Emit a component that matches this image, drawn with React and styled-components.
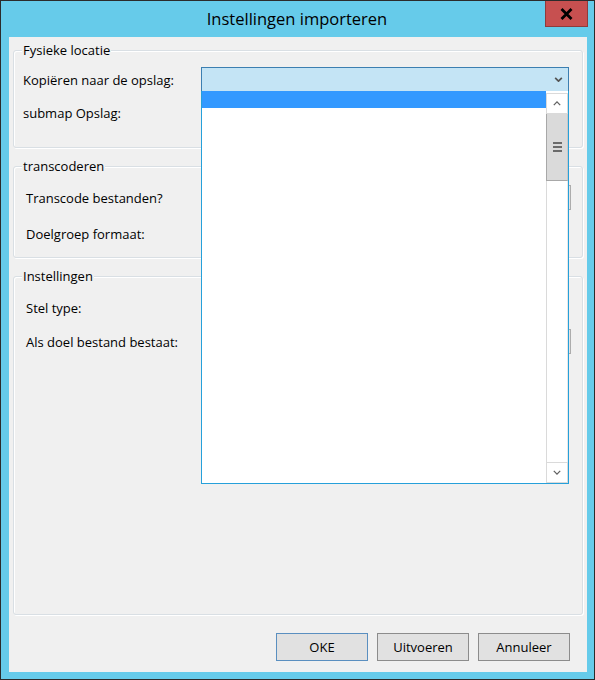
import React from 'react';
import styled, { createGlobalStyle } from 'styled-components';

const GlobalStyle = createGlobalStyle`
  html, body {
    margin: 0;
    padding: 0;
    background: #ffffff;
  }
  body {
    font-family: "Open Sans", "Noto Sans", sans-serif;
    color: #000;
  }
`;

const Window = styled.div`
  width: 595px;
  height: 680px;
  box-sizing: border-box;
  border: 1px solid #2b2b2b;
  background: #66cbea;
  display: flex;
  flex-direction: column;
`;

const TitleBar = styled.div`
  height: 36px;
  display: flex;
  align-items: flex-start;
  flex-shrink: 0;
`;

const Title = styled.div`
  flex: 1;
  padding-left: 48px;
  text-align: center;
  font-size: 16.5px;
  line-height: 36px;
  color: #000;
`;

const CloseButton = styled.div`
  width: 43px;
  height: 26px;
  margin-right: 6px;
  box-sizing: border-box;
  background: #c75050;
  border: 1px solid #8f3b3b;
  border-top: none;
  display: flex;
  align-items: center;
  justify-content: center;
`;

const Client = styled.div`
  flex: 1;
  margin: 0 7px 7px 8px;
  background: #f0f0f0;
  box-sizing: border-box;
  padding: 13px 4px 11px 4px;
  display: flex;
  flex-direction: column;
  gap: 18px;
`;

const Group = styled.div`
  position: relative;
  box-sizing: border-box;
  height: ${({ $h }) => ($h ? `${$h}px` : 'auto')};
  flex: ${({ $grow }) => ($grow ? 1 : 'none')};
  border: 1px solid #d9dfe4;
  border-radius: 3px;
  box-shadow: inset 1px 1px 0 #fff, 1px 1px 0 #fff;
  padding: ${({ $top }) => $top}px 13px 0 ${({ $left }) => $left}px;
  display: flex;
  flex-direction: column;
  gap: ${({ $gap }) => $gap}px;
`;

const Legend = styled.span`
  position: absolute;
  top: -10px;
  left: 8px;
  padding: 0 1px;
  background: #f0f0f0;
  font-size: 13px;
  line-height: 18px;
`;

const Row = styled.div`
  display: grid;
  grid-template-columns: 1fr 368px;
  align-items: center;
  height: 25px;
`;

const Label = styled.span`
  font-size: 13px;
  line-height: 18px;
  white-space: nowrap;
`;

const Combo = styled.div`
  position: relative;
  height: 25px;
  box-sizing: border-box;
  border: 1px solid #3c7fb1;
  background: #c4e4f5;
  display: flex;
  align-items: center;
  justify-content: flex-end;
  padding-right: 5px;
`;

const HiddenCombo = styled.div`
  height: 25px;
  margin-right: -2px;
  box-sizing: border-box;
  border: 1px solid #acacac;
  background: #e5e5e5;
`;

const Dropdown = styled.div`
  position: absolute;
  z-index: 10;
  top: 100%;
  left: -1px;
  width: 368px;
  height: 393px;
  box-sizing: border-box;
  border: 1px solid #26a0da;
  border-top: none;
  background: #fff;
  display: flex;
`;

const List = styled.div`
  flex: 1;
`;

const SelectedItem = styled.div`
  height: 17px;
  background: #3399ff;
`;

const Scrollbar = styled.div`
  width: 22px;
  padding-top: 2px;
  display: flex;
  flex-direction: column;
  box-sizing: border-box;
`;

const ArrowButton = styled.div`
  height: 21px;
  box-sizing: border-box;
  border: 1px solid #dadada;
  background: #fff;
  display: flex;
  align-items: center;
  justify-content: center;
`;

const Thumb = styled.div`
  height: 67px;
  box-sizing: border-box;
  background: #dadada;
  border: 1px solid #a8a8a8;
  border-top: none;
  border-right-color: #c8c8c8;
  display: flex;
  flex-direction: column;
  align-items: center;
  justify-content: center;
  gap: 2px;
`;

const Grip = styled.span`
  width: 9px;
  height: 2px;
  background: #6a6a6a;
`;

const Track = styled.div`
  flex: 1;
  background: #fff;
  border-left: 1px solid #dadada;
  border-right: 1px solid #e8e8e8;
`;

const ButtonRow = styled.div`
  display: flex;
  justify-content: flex-end;
  gap: 9px;
  padding-right: 13px;
`;

const Button = styled.div`
  width: 92px;
  height: 28px;
  box-sizing: border-box;
  background: #e1e1e1;
  border: 1px solid ${({ $default }) => ($default ? '#5a8fc0' : '#8c8c8c')};
  display: flex;
  align-items: center;
  justify-content: center;
  font-size: 13px;
  color: #000;
`;

const Chevron = ({ up, size = 9, stroke = '#555', width = 2 }) => (
  <svg width={size} height={Math.round(size * 0.6)} viewBox="0 0 10 6">
    <polyline
      points={up ? '1,5 5,1 9,5' : '1,1 5,5 9,1'}
      fill="none"
      stroke={stroke}
      strokeWidth={width}
    />
  </svg>
);

const CloseGlyph = () => (
  <svg width="13" height="12" viewBox="0 0 13 12">
    <path d="M1.5 1 L11.5 11 M11.5 1 L1.5 11" stroke="#000" strokeWidth="2.8" strokeLinecap="butt" />
  </svg>
);

const App = () => (
  <>
    <GlobalStyle />
    <Window>
      <TitleBar>
        <Title>Instellingen importeren</Title>
        <CloseButton>
          <CloseGlyph />
        </CloseButton>
      </TitleBar>
      <Client>
        <Group $h={98} $top={16} $left={9} $gap={8}>
          <Legend>Fysieke locatie</Legend>
          <Row>
            <Label>Kopiëren naar de opslag:</Label>
            <Combo>
              <Chevron />
              <Dropdown>
                <List>
                  <SelectedItem />
                </List>
                <Scrollbar>
                  <ArrowButton>
                    <Chevron up size={8} stroke="#606060" width={1.6} />
                  </ArrowButton>
                  <Thumb>
                    <Grip />
                    <Grip />
                    <Grip />
                  </Thumb>
                  <Track />
                  <ArrowButton>
                    <Chevron size={8} stroke="#606060" width={1.6} />
                  </ArrowButton>
                </Scrollbar>
              </Dropdown>
            </Combo>
          </Row>
          <Row>
            <Label>submap Opslag:</Label>
            <span />
          </Row>
        </Group>
        <Group $h={92} $top={18} $left={12} $gap={11}>
          <Legend>transcoderen</Legend>
          <Row>
            <Label>Transcode bestanden?</Label>
            <HiddenCombo />
          </Row>
          <Row>
            <Label>Doelgroep formaat:</Label>
            <span />
          </Row>
        </Group>
        <Group $grow $top={18} $left={12} $gap={9}>
          <Legend>Instellingen</Legend>
          <Row>
            <Label>Stel type:</Label>
            <span />
          </Row>
          <Row>
            <Label>Als doel bestand bestaat:</Label>
            <HiddenCombo />
          </Row>
        </Group>
        <ButtonRow>
          <Button $default>OKE</Button>
          <Button>Uitvoeren</Button>
          <Button>Annuleer</Button>
        </ButtonRow>
      </Client>
    </Window>
  </>
);

export default App;
